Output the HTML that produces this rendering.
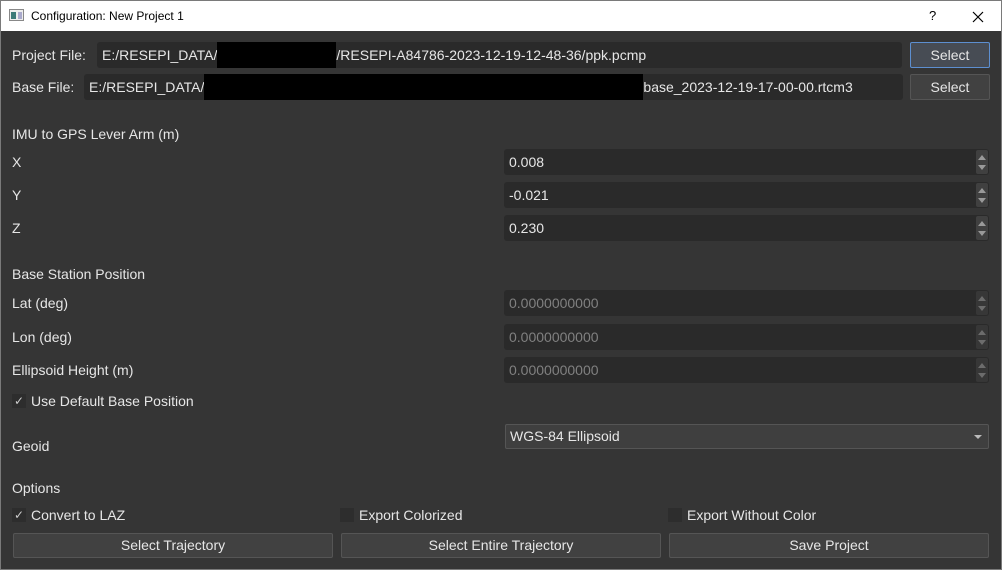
<!DOCTYPE html>
<html><head><style>
*{margin:0;padding:0;box-sizing:border-box}
body{width:1002px;height:570px;background:#353535;font-family:"Liberation Sans",sans-serif;font-size:14px;color:#e6e6e6;position:relative;overflow:hidden;box-shadow:inset 0 0 0 1px #7a7a7a}
.a{position:absolute;white-space:nowrap}
.title{left:0;top:0;width:1002px;height:31px;background:#fff;color:#000;font-size:12px;border:1px solid #7a7a7a;border-bottom:0}
.in{background:#2a2a2a;border-radius:3px;height:26px;line-height:26px;padding-left:5px}
.btn{background:#414141;border:1px solid #555;border-radius:2px;text-align:center;line-height:22px;height:25px}
.spin{position:absolute;right:1px;top:1px;width:12px;height:24px;background:#404040;border-radius:2px}
.spin:before{content:"";position:absolute;left:2px;top:5px;border:4px solid transparent;border-bottom:5px solid #999;border-top:0}
.spin:after{content:"";position:absolute;left:2px;top:15px;border:4px solid transparent;border-top:5px solid #999;border-bottom:0}
.dis{color:#808080}
.cb{width:14px;height:14px;background:#2d2d2d;display:inline-block;vertical-align:-2px;margin-right:5px;font-size:12px;line-height:14px;text-align:center;color:#ccc;position:relative}
.cb i{position:absolute;left:2px;top:0;font-style:normal}
</style></head><body>
<div class="a title">
<svg style="position:absolute;left:8px;top:8px" width="15" height="12"><rect x="0.5" y="0.5" width="14" height="11" fill="#eee" stroke="#888"/><rect x="2" y="3" width="5" height="7" fill="#3c7a78"/><rect x="9" y="3" width="4" height="7" fill="#aac"/></svg>
<span class="a" style="left:30px;top:8px">Configuration: New Project 1</span>
<span class="a" style="left:928px;top:7px;font-size:13px">?</span>
<svg style="position:absolute;left:971px;top:10px" width="12" height="12"><path d="M1 1L11 11M11 1L1 11" stroke="#000" stroke-width="1.2"/></svg>
</div>
<span class="a" style="left:12px;top:47px">Project File:</span>
<div class="a in" style="left:97px;top:42px;width:805px">E:/RESEPI_DATA/<span style="display:inline-block;width:119px;height:26px;background:#000;vertical-align:top"></span>/RESEPI-A84786-2023-12-19-12-48-36/ppk.pcmp</div>
<div class="a btn" style="left:910px;top:42px;width:80px;height:26px;border-color:#5d8fd0;background:#474c54;line-height:24px">Select</div>
<span class="a" style="left:12px;top:79px">Base File:</span>
<div class="a in" style="left:84px;top:74px;width:819px">E:/RESEPI_DATA/<span style="display:inline-block;width:439px;height:26px;background:#000;vertical-align:top"></span>base_2023-12-19-17-00-00.rtcm3</div>
<div class="a btn" style="left:910px;top:74px;width:80px;height:26px;line-height:24px">Select</div>
<span class="a" style="left:12px;top:126px">IMU to GPS Lever Arm (m)</span>
<span class="a" style="left:12px;top:154px">X</span>
<div class="a in" style="left:504px;top:149px;width:485px">0.008<div class="spin"></div></div>
<span class="a" style="left:12px;top:187px">Y</span>
<div class="a in" style="left:504px;top:182px;width:485px">-0.021<div class="spin"></div></div>
<span class="a" style="left:12px;top:220px">Z</span>
<div class="a in" style="left:504px;top:215px;width:485px">0.230<div class="spin"></div></div>
<span class="a" style="left:12px;top:266px">Base Station Position</span>
<span class="a" style="left:12px;top:295px">Lat (deg)</span>
<div class="a in dis" style="left:504px;top:290px;width:485px">0.0000000000<div class="spin" style="opacity:.6"></div></div>
<span class="a" style="left:12px;top:329px">Lon (deg)</span>
<div class="a in dis" style="left:504px;top:324px;width:485px">0.0000000000<div class="spin" style="opacity:.6"></div></div>
<span class="a" style="left:12px;top:362px">Ellipsoid Height (m)</span>
<div class="a in dis" style="left:504px;top:357px;width:485px">0.0000000000<div class="spin" style="opacity:.6"></div></div>
<span class="a" style="left:12px;top:393px"><span class="cb"><i>✓</i></span>Use Default Base Position</span>
<span class="a" style="left:12px;top:438px">Geoid</span>
<div class="a btn" style="left:505px;top:424px;width:484px;text-align:left;padding-left:4px;background:#3f3f3f">WGS-84 Ellipsoid<span style="position:absolute;right:6px;top:10px;border:4px solid transparent;border-top:4px solid #bbb"></span></div>
<span class="a" style="left:12px;top:480px">Options</span>
<span class="a" style="left:12px;top:507px"><span class="cb"><i>✓</i></span>Convert to LAZ</span>
<span class="a" style="left:340px;top:507px"><span class="cb"></span>Export Colorized</span>
<span class="a" style="left:668px;top:507px"><span class="cb"></span>Export Without Color</span>
<div class="a btn" style="left:13px;top:533px;width:320px">Select Trajectory</div>
<div class="a btn" style="left:341px;top:533px;width:320px">Select Entire Trajectory</div>
<div class="a btn" style="left:669px;top:533px;width:320px">Save Project</div>
</body></html>
